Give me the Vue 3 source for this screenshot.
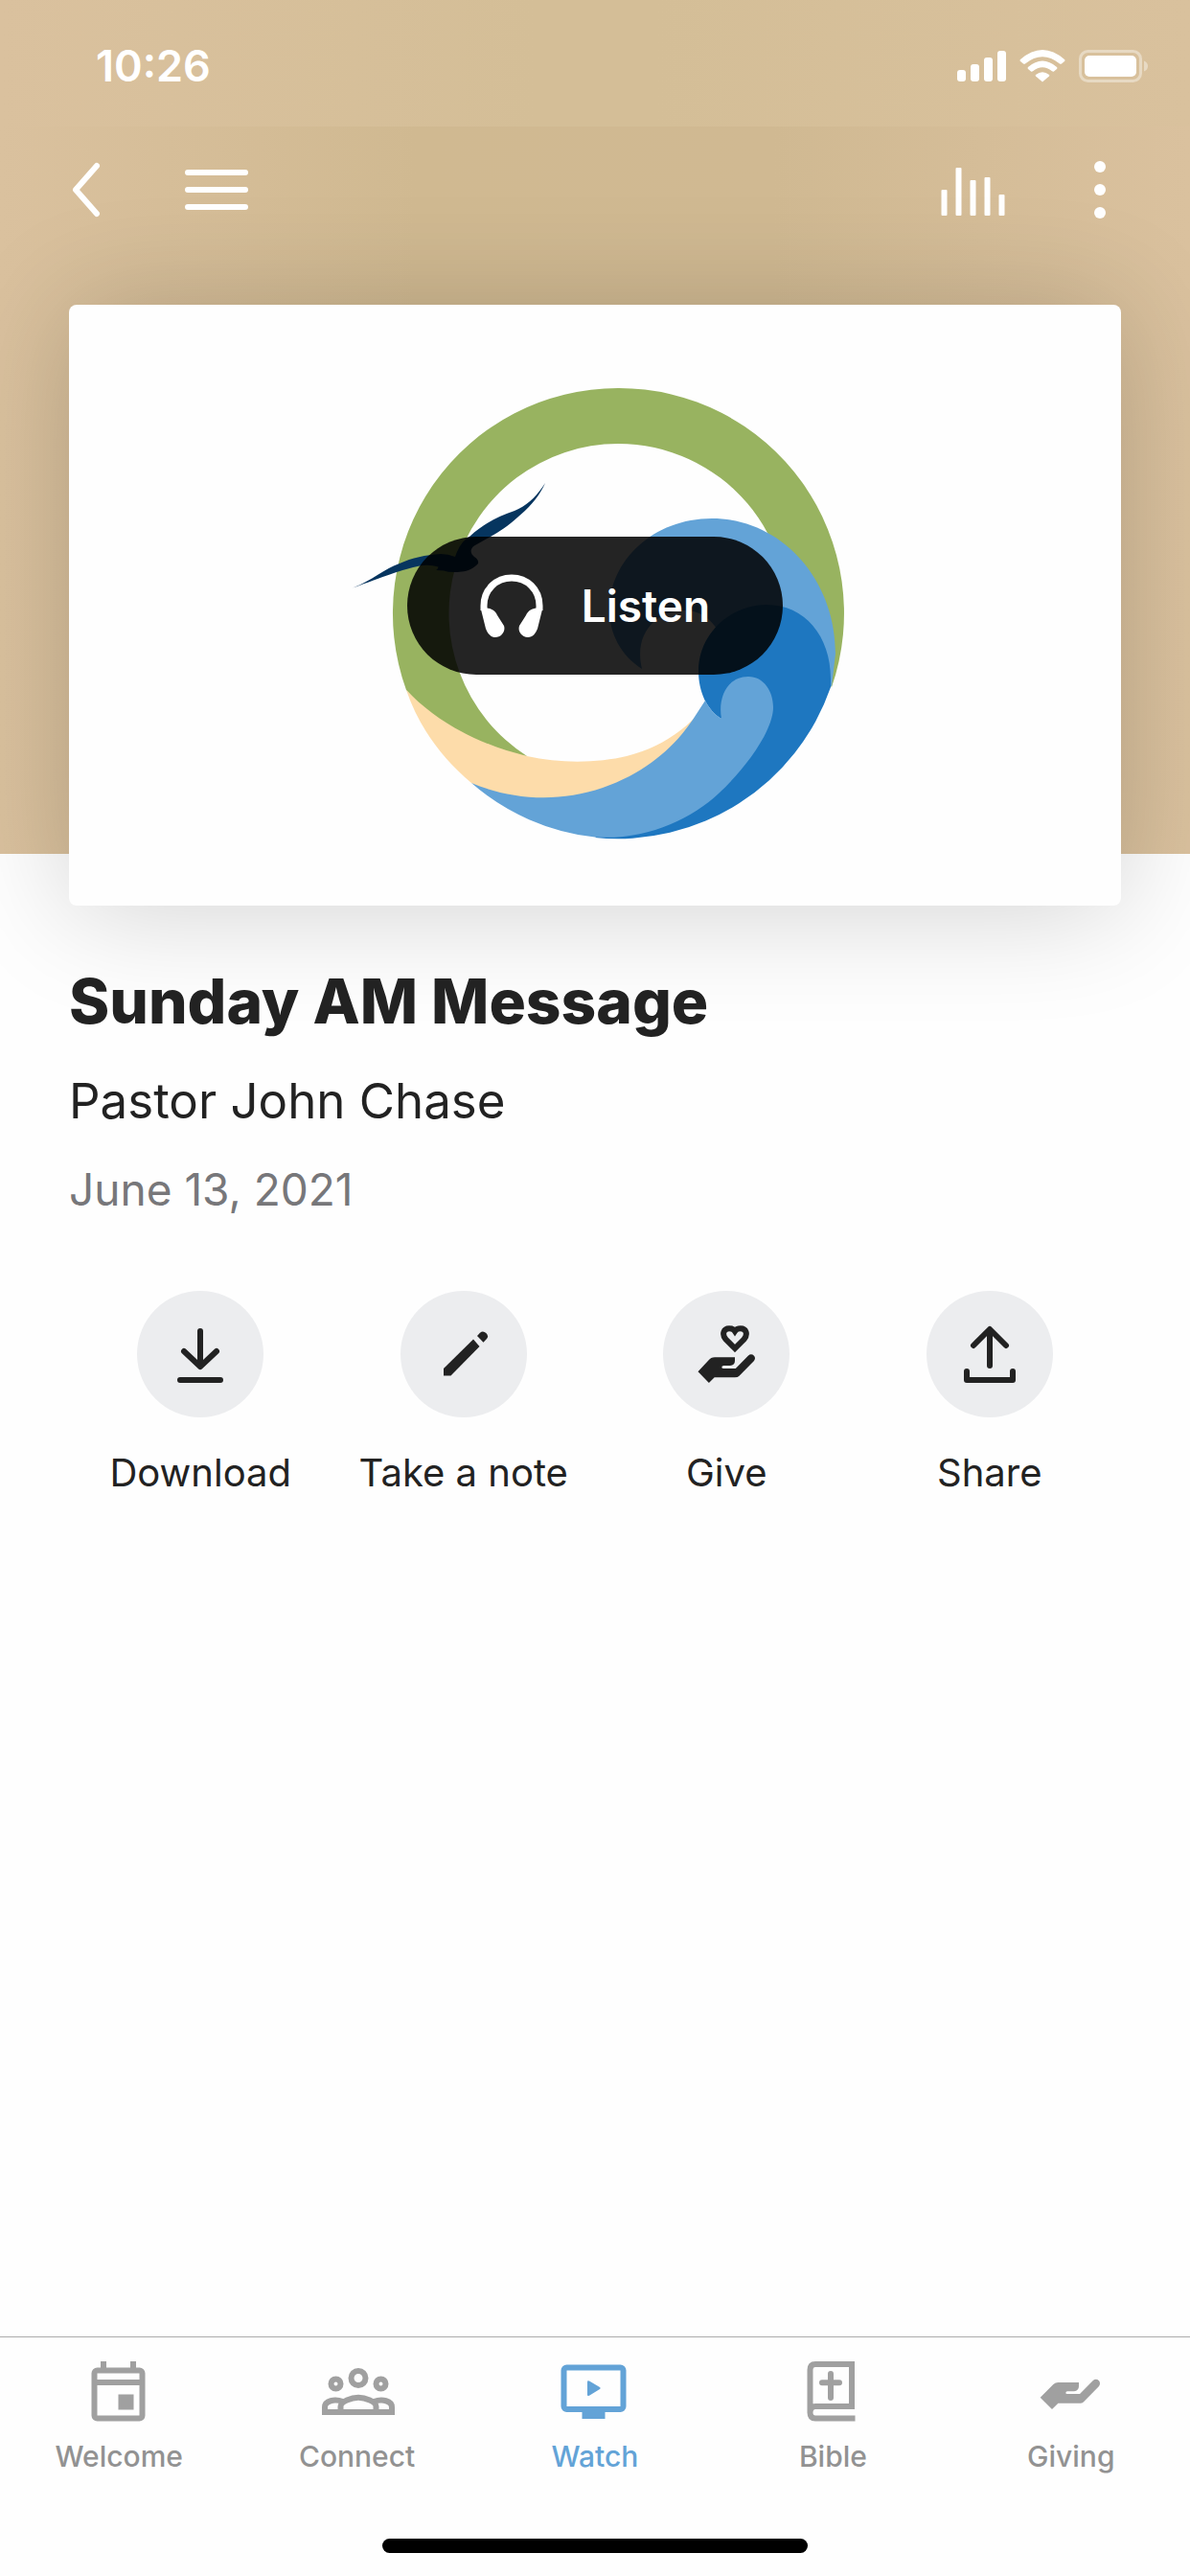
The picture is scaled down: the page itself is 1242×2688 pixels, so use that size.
<script setup>
import { ref } from 'vue';

const message = {
  title: 'Sunday AM Message',
  speaker: 'Pastor John Chase',
  date: 'June 13, 2021',
};

const actions = [
  { id: 'download', label: 'Download' },
  { id: 'note', label: 'Take a note' },
  { id: 'give', label: 'Give' },
  { id: 'share', label: 'Share' },
];

const tabs = [
  { id: 'welcome', label: 'Welcome' },
  { id: 'connect', label: 'Connect' },
  { id: 'watch', label: 'Watch' },
  { id: 'bible', label: 'Bible' },
  { id: 'giving', label: 'Giving' },
];

const activeTab = ref('watch');
</script>

<template>
  <div class="page">
    <header class="hero">
      <div class="status-bar">
        <span class="clock">10:26</span>
        <svg class="status-icons" viewBox="0 0 201 34" aria-hidden="true">
          <!-- signal -->
          <rect x="0" y="21" width="9" height="12" rx="3" />
          <rect x="14" y="15" width="9" height="18" rx="3" />
          <rect x="28" y="8" width="9" height="25" rx="3" />
          <rect x="42" y="1" width="9" height="32" rx="3" />
          <!-- wifi -->
          <path d="M66 10 Q89 -10 112 10 Q113 11 112 12 L109 14.500 Q108 15.200 107 14.500 Q89 0 71 14.500 Q70 15.200 69 14.500 L66 12 Q65 11 66 10Z" />
          <path d="M74 18 Q89 5 104 18 Q105 19 104 20 L101 22.500 Q100 23 99 22.300 Q89 14 79 22.300 Q78 23 77 22.500 L74 20 Q73 19 74 18Z" />
          <path d="M82 26 Q89 20.500 96 26 Q96.800 26.700 96 27.500 L89 33.500 L82 27.500 Q81.200 26.700 82 26Z" />
          <!-- battery -->
          <rect x="128.500" y="1.500" width="63" height="31" rx="8" fill="none" stroke="#fff" stroke-width="3" opacity="0.4" />
          <rect x="133" y="6" width="54" height="22" rx="5" />
          <path d="M195 11.500 Q199 13 199 17 Q199 21 195 22.500Z" opacity="0.4" />
        </svg>
      </div>

      <div class="toolbar">
        <button class="tool" type="button" aria-label="Back">
          <svg width="32" height="60" viewBox="0 0 32 60">
            <path d="M28 5 L6 30 L28 55" />
          </svg>
        </button>
        <button class="tool" type="button" aria-label="Menu">
          <svg width="66" height="60" viewBox="0 0 66 60">
            <path d="M3 12 H63 M3 30 H63 M3 48 H63" />
          </svg>
        </button>
        <span class="spacer"></span>
        <button class="tool" type="button" aria-label="Now playing">
          <svg class="filled" width="71" height="60" viewBox="0 0 71 60">
            <rect x="0.500" y="30" width="6" height="27" rx="1" />
            <rect x="15.500" y="7" width="6" height="50" rx="1" />
            <rect x="30.500" y="20" width="6" height="37" rx="1" />
            <rect x="45.500" y="17" width="6" height="40" rx="1" />
            <rect x="60.500" y="35" width="6" height="22" rx="1" />
          </svg>
        </button>
        <button class="tool" type="button" aria-label="More options">
          <svg class="filled" width="14" height="60" viewBox="0 0 14 60">
            <circle cx="7" cy="6" r="6" />
            <circle cx="7" cy="30" r="6" />
            <circle cx="7" cy="54" r="6" />
          </svg>
        </button>
      </div>

      <div class="cover">
        <svg class="artwork" viewBox="72 318 1098 627" role="img" aria-label="Message artwork">
          <!-- ring -->
          <path fill="#98b360" d="M424 720 A235 235 0 0 1 645 405 A235 235 0 0 1 868 717 L820 668 A177 177 0 0 0 645 463 A177 177 0 0 0 550 789 Q480 785 424 720Z" />
          <!-- sand -->
          <path fill="#fddcaa" d="M424 720 C455 753 500 777 550 789 C585 797 625 796 654 789 C682 782 705 769 725 749 L720 800 L640 840 L560 850 L492 817 C460 790 437 758 424 720Z" />
          <!-- back wave -->
          <path fill="#63a3d7" d="M670 698 C648 684 636 661 636 636 C636 585 682 541 743 541 C815 541 872 604 872 682 L868 716 L760 715 L748 656 C740 644 729 637 714 637 C686 637 661 660 670 698Z" />
          <!-- front wave -->
          <path fill="#1e77c0" d="M753 750 C738 741 729 722 729 700 C729 662 762 631 800 631 C840 631 867 664 867 708 L867 717 A235 235 0 0 1 621 874 L760 780Z" />
          <path fill="#63a3d7" d="M736 731 C740 739 746 746 753 750 C749 728 759 706 781 706 C797 706 807 721 807 738 C807 764 775 805 750 828 C721 855 675 877 621 873.500 A235 235 0 0 1 492 817 C530 833 580 839 629 822 C675 806 704 779 723 751 Z" />
          <!-- bird -->
          <path fill="#06355f" d="M368 613.500 C388 606 402 593 417 588 C430 582 444 579 460 578 Q468 578 475 581 C479 570 483 564 490 560 C505 546 520 539 537 533 C550 528 561 517 569 504 C563 518 552 530 540 540 C530 549 521 555 512 560 L495 569.500 C490 573 491 578 495 581 Q500 584 499 588 C495 593 488 596 482 596.500 Q470 598 463 595.500 L455 595 Q457 594 457.500 591.500 Q448 588.500 438 590.500 C420 594 400 602 368 613.500Z" />
        </svg>
        <button class="listen" type="button">
          <svg width="66" height="66" viewBox="0 0 66 66" aria-hidden="true">
            <path d="M4 38 V33 C4 16 17 4 33 4 C49 4 62 16 62 33 V38" fill="none" stroke="#fff" stroke-width="7" />
            <path d="M1 37 C4 34 15 35 18 43 L25 54 C27 60 22 66 16 66 C11 66 8 62 6 57 Z" />
            <path d="M65 37 C62 34 51 35 48 43 L41 54 C39 60 44 66 50 66 C55 66 58 62 60 57 Z" />
          </svg>
          <span>Listen</span>
        </button>
      </div>
    </header>

    <main class="content">
      <h1 class="title">{{ message.title }}</h1>
      <p class="speaker">{{ message.speaker }}</p>
      <p class="date">{{ message.date }}</p>

      <div class="actions">
        <button v-for="action in actions" :key="action.id" class="action" type="button">
          <span class="action-icon">
            <svg viewBox="0 0 132 132" aria-hidden="true">
              <g v-if="action.id === 'download'" class="line">
                <path d="M66 42 V78 M49 63 L66 79 L83 63 M45 93 H87" />
              </g>
              <g v-else-if="action.id === 'note'">
                <path d="M45 88.500 V81 L76 50.500 L82.500 58 L52.500 88.500Z" />
                <path d="M80 47 L83 43.800 Q86 41 89.300 44 Q92.500 47.200 90 50 L86.500 53.700Z" />
              </g>
              <g v-else-if="action.id === 'give'">
                <path
                  fill="none"
                  stroke="#222"
                  stroke-width="6"
                  d="M75 60 L65.500 50.500 C61 45 63.500 39.300 69 39.300 C72 39.300 74 40.500 75 42 C76 40.500 78 39.300 81 39.300 C86.500 39.300 89 45 84.500 50.500Z"
                />
                <path d="M36.500 84.300 L47.900 96 L53.700 90.300 H75 Q78 90.300 79.500 88.700 L95 73 Q97 70 95 67.700 Q92 65 88.800 67.700 L75.800 81 H63.400 Q61.300 81 61.300 79.700 Q61.300 78 63.400 78 H70 Q75 77.500 75 73 V69.300 H54 Q50 69.300 47.200 72.700Z" />
              </g>
              <g v-else class="line">
                <path d="M66 41 V78 M49 57 L66 40 L83 57 M42 84 V93 H90 V84" />
              </g>
            </svg>
          </span>
          <span class="action-label">{{ action.label }}</span>
        </button>
      </div>
    </main>

    <nav class="tab-bar">
      <div class="tabs">
        <a
          v-for="tab in tabs"
          :key="tab.id"
          class="tab"
          :class="{ active: tab.id === activeTab }"
          :href="`#${tab.id}`"
          @click.prevent="activeTab = tab.id"
        >
          <svg class="tab-icon" viewBox="0 0 80 72" aria-hidden="true">
            <g v-if="tab.id === 'welcome'">
              <rect class="outline" x="14.500" y="13.500" width="50" height="50" rx="3" />
              <path class="outline" d="M14 26 H65 M24 4 V13 M55 4 V13" />
              <rect x="39.500" y="38.500" width="16" height="16" />
            </g>
            <g v-else-if="tab.id === 'connect'">
              <circle class="outline" cx="41" cy="21.500" r="7.500" />
              <circle class="outline" cx="17.500" cy="27.500" r="5" />
              <circle class="outline" cx="64.500" cy="27.500" r="5" />
              <path class="outline" d="M6 57 V52 C6 45 16 43 25 46 M76 57 V52 C76 45 66 43 57 46 M3 57 H79" />
              <path class="outline" d="M22.500 57 V51 C22.500 46 34 41.700 41 41.700 C48 41.700 59.500 46 59.500 51 V57" />
            </g>
            <g v-else-if="tab.id === 'watch'">
              <rect class="outline" x="7.500" y="10.500" width="62" height="43.500" rx="3" />
              <rect x="26.500" y="56" width="24" height="8" />
              <path d="M32 25.500 Q32 23.500 34 24.500 L45 31 Q46.500 32 45 33 L34 39.700 Q32 40.500 32 39Z" />
            </g>
            <g v-else-if="tab.id === 'bible'">
              <path class="outline" d="M63.500 63.500 H22 Q16.500 63.500 16.500 57.500 Q16.500 51 22 51 H60 V7 H22 Q16.500 7 16.500 13 V58" />
              <path class="outline" stroke-linecap="round" d="M38 17 V42 M29 26.200 H47" />
            </g>
            <g v-else>
              <path d="M7.700 41.700 L20 54 L26.400 47.700 H50 Q52 47.700 53.300 46 L69 30 Q71 27 69 24.300 Q66 21.500 62.800 24 L49 38 H36 Q34.300 38 34.300 37 Q34.300 35.300 36 35.300 H43 Q48 34.500 48 30 V26 H26.400 Q23.500 26 21.400 28Z" />
            </g>
          </svg>
          <span class="tab-label">{{ tab.label }}</span>
        </a>
      </div>
      <div class="home-indicator"></div>
    </nav>
  </div>
</template>

<style>
body {
  margin: 0;
  background: #fefefe;
}
</style>

<style scoped>
.page {
  display: flex;
  flex-direction: column;
  min-height: 100vh;
  background: #fefefe;
  color: #222;
  font-family: Inter, "Noto Sans", sans-serif;
}

button {
  padding: 0;
  border: none;
  background: none;
  color: inherit;
  font-family: inherit;
  cursor: pointer;
}

/* hero */
.hero {
  display: flex;
  flex-direction: column;
  background: linear-gradient(90deg, #dac19e 0%, #d0b991 35%, #d0b992 65%, #dac19e 100%);
}

.status-bar {
  display: flex;
  align-items: center;
  justify-content: space-between;
  height: 132px;
  padding: 6px 42px 0 100px;
  box-sizing: border-box;
  background: linear-gradient(90deg, #dac19e 0%, #d4be97 45%, #d4be97 55%, #d9c19d 100%);
  color: #fff;
}

.clock {
  font-size: 45px;
  font-weight: 600;
  line-height: 56px;
}

.status-icons {
  width: 201px;
  height: 34px;
  fill: #fff;
}

.toolbar {
  display: flex;
  align-items: center;
  height: 132px;
  padding: 0 87px 0 73px;
}

.tool {
  display: flex;
}

.tool + .tool {
  margin-left: 88px;
}

.tool svg {
  fill: none;
  stroke: #fff;
  stroke-width: 6;
  stroke-linecap: round;
  stroke-linejoin: round;
}

.tool svg.filled {
  fill: #fff;
  stroke: none;
}

.spacer {
  flex: 1;
}

.cover {
  display: grid;
  place-items: center;
  margin: 54px 72px -54px;
  aspect-ratio: 7 / 4;
  border-radius: 8px;
  background: #fefefe;
  box-shadow: 0 4px 120px rgba(0, 0, 0, 0.18);
}

.artwork,
.listen {
  grid-area: 1 / 1;
}

.artwork {
  width: 100%;
}

.listen {
  display: flex;
  align-items: center;
  gap: 40px;
  height: 144px;
  padding: 0 76px;
  border-radius: 72px;
  background: rgba(0, 0, 0, 0.86);
  color: #fff;
  font-size: 46px;
  font-weight: 600;
  line-height: 56px;
  z-index: 1;
}

.listen svg {
  fill: #fff;
}

/* message details */
.content {
  flex: 1;
  padding: 114px 72px 0;
}

.title,
.speaker,
.date {
  margin: 0;
}

.title {
  font-size: 64px;
  font-weight: 800;
  line-height: 80px;
}

.speaker {
  margin-top: 32px;
  font-size: 51px;
  line-height: 64px;
}

.date {
  margin-top: 32px;
  color: #77777a;
  font-size: 46px;
  line-height: 56px;
}

.actions {
  display: grid;
  grid-template-columns: repeat(4, 1fr);
  margin-top: 78px;
}

.action {
  display: flex;
  flex-direction: column;
  align-items: center;
  gap: 32px;
}

.action-icon {
  width: 132px;
  height: 132px;
  border-radius: 50%;
  background: #ecedef;
}

.action-icon svg {
  display: block;
  fill: #222;
}

.line {
  fill: none;
  stroke: #222;
  stroke-width: 6;
  stroke-linecap: round;
  stroke-linejoin: round;
}

.action-label {
  font-size: 40px;
  line-height: 52px;
  white-space: nowrap;
}

/* bottom tabs */
.tab-bar {
  padding: 21px 0 24px;
  border-top: 1px solid #acacac;
}

.tabs {
  display: grid;
  grid-template-columns: repeat(5, 1fr);
}

.tab {
  display: flex;
  flex-direction: column;
  align-items: center;
  gap: 11px;
  color: #929292;
  text-decoration: none;
}

.tab-icon {
  width: 80px;
  height: 72px;
  color: #a0a0a0;
  fill: currentColor;
}

.tab.active,
.tab.active .tab-icon {
  color: #63a3d7;
}

.outline {
  fill: none;
  stroke: currentColor;
  stroke-width: 6;
}

.tab-label {
  font-size: 30px;
  font-weight: 500;
  line-height: 40px;
}

.home-indicator {
  width: 444px;
  height: 15px;
  margin: 66px auto 0;
  border-radius: 8px;
  background: #000;
}
</style>
